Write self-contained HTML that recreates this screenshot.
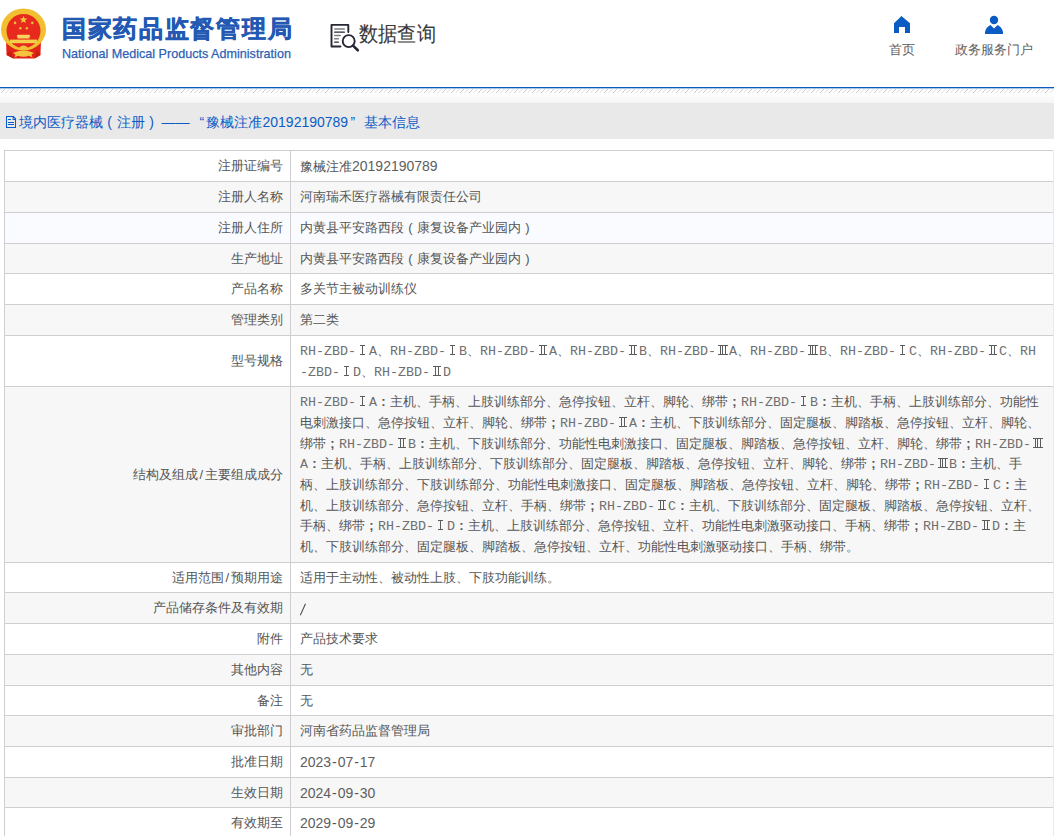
<!DOCTYPE html>
<html><head><meta charset="utf-8">
<style>
html,body{margin:0;padding:0;}
body{width:1054px;height:836px;overflow:hidden;position:relative;background:#fff;font-family:"Liberation Sans",sans-serif;font-size:13px;color:#555;}
.abs{position:absolute;}
.title{position:absolute;left:62px;top:13.5px;font-size:24.2px;font-weight:bold;color:#2459b3;line-height:30px;white-space:nowrap;letter-spacing:1.7px;-webkit-text-stroke:0.5px #2459b3;}
.en{position:absolute;left:62px;top:45.5px;font-size:12.6px;color:#2c5fb5;line-height:16px;white-space:nowrap;-webkit-text-stroke:0.25px #2c5fb5;}
.sq{position:absolute;left:359px;top:19.5px;font-size:21.3px;color:#383838;line-height:28px;white-space:nowrap;transform:scaleX(0.915);transform-origin:0 0;-webkit-text-stroke:0.1px #383838}
.nav{position:absolute;font-size:13px;color:#606060;line-height:16px;white-space:nowrap;}
.blue{position:absolute;left:0;top:87px;width:1054px;height:1px;background:#0a5cc2;}
.blue2{position:absolute;left:0;top:88px;width:1054px;height:1px;background:#a9c5ea;}
.hatch{position:absolute;left:0;top:89px;width:1054px;height:4px;
 background-image:repeating-linear-gradient(135deg, transparent 0px, transparent 2.2px, #c9c9c9 2.2px, #c9c9c9 3.2px, transparent 3.2px, transparent 4.5px);}
.grad{position:absolute;left:0;top:93px;width:1054px;height:10px;background:linear-gradient(#ffffff,#f5f5f5);}
.band{position:absolute;left:0;top:103px;width:1054px;height:36px;background:#e9e9e9;}
.crumb{position:absolute;top:114px;font-size:14px;color:#0b5cc7;line-height:16px;white-space:nowrap;}
.row{position:absolute;left:4px;width:1049px;}
.hl{position:absolute;left:4px;width:1049px;height:1px;background:#d0ced2;}
.vl{position:absolute;top:150px;width:1px;height:690px;background:#d0ced2;}
.lab{position:absolute;right:771px;line-height:20.7px;white-space:nowrap;color:#555;}
.val{position:absolute;left:300px;line-height:20.7px;white-space:nowrap;color:#555;}
.sl{display:inline-block;width:7.5px;text-align:center;}
.c{display:inline-block;width:13px;text-align:center;}
.cb{font-weight:bold;}
.d{font-size:14px;color:#5e5e5e;}
.hy{display:inline-block;width:6.5px;text-align:center;font-size:14px;}
.slv{font-family:"Liberation Sans",sans-serif;font-size:15.5px;color:#666;display:inline-block;transform:scaleX(0.9);}
.m{font-family:"Liberation Mono",monospace;font-size:13.33px;color:#707070;}
.r{display:inline-block;width:13px;height:10px;position:relative;vertical-align:baseline;}
.r::before{content:"";position:absolute;top:0;height:10px;box-sizing:border-box;border-top:1px solid #5c5c5c;border-bottom:1px solid #5c5c5c;}
.r1::before{left:4px;width:5px;background:linear-gradient(#5c5c5c,#5c5c5c) 2px 0/1px 100% no-repeat;}
.r2::before{left:2.5px;width:8px;background:linear-gradient(#5c5c5c,#5c5c5c) 2px 0/1px 100% no-repeat,linear-gradient(#5c5c5c,#5c5c5c) 5px 0/1px 100% no-repeat;}
.r3::before{left:1.5px;width:10px;background:linear-gradient(#5c5c5c,#5c5c5c) 2px 0/1px 100% no-repeat,linear-gradient(#5c5c5c,#5c5c5c) 4.5px 0/1px 100% no-repeat,linear-gradient(#5c5c5c,#5c5c5c) 7px 0/1px 100% no-repeat;}
.crumb.m{color:#0b5cc7;}
</style></head><body>
<svg class="abs" style="left:0;top:0" width="48" height="62" viewBox="0 0 48 62">
  <path d="M6 38 L41 38 L40.5 55 L34.5 58.5 L13 58.5 L6.5 55 Z" fill="#e2231a"/>
  <path d="M10 50 L14 58.5 L6.5 55 Z M37 50 L34.5 58.5 L40.5 55 Z" fill="#c91d14"/>
  <ellipse cx="23.5" cy="29.5" rx="22.5" ry="21" fill="#f1bf30"/>
  <ellipse cx="23.5" cy="31" rx="17" ry="17" fill="#e8291d"/>
  <polygon points="23.5,15.8 24.5,18.6 27.4,18.6 25.1,20.3 26,23.1 23.5,21.4 21,23.1 21.9,20.3 19.6,18.6 22.5,18.6" fill="#f2cc3a"/>
  <circle cx="15.1" cy="22.9" r="1.3" fill="#e6bf38"/>
  <circle cx="32.3" cy="22.9" r="1.3" fill="#e6bf38"/>
  <circle cx="20.4" cy="28.3" r="1.2" fill="#e6bf38"/>
  <circle cx="26.9" cy="28.3" r="1.2" fill="#e6bf38"/>
  <path d="M17.5 34.8 H29.5 L30.5 36.6 H29.5 V38.6 H17.5 V36.6 H16.5 Z" fill="#f6d462"/>
  <rect x="10" y="39.6" width="27" height="3.6" fill="#f5cf4a"/>
  <path d="M19.5 47 Q23.5 44 27.5 47 L26 49 L21 49 Z" fill="#f3c53e"/>
  <path d="M13 53 L17 51.5 Q23.5 49.5 30 51.5 L34 53 L31.5 54.5 L32.5 57.5 L29 55.8 Q23.5 57.5 18 55.8 L14.5 57.5 L15.5 54.5 Z" fill="#f3c53e"/>
</svg>
<div class="title">国家药品监督管理局</div>
<div class="en">National Medical Products Administration</div>
<svg class="abs" style="left:329px;top:22px" width="32" height="32" viewBox="0 0 32 32">
  <path d="M11.5 24.5 H2.5 V2.9 H19.3 V10" fill="none" stroke="#262636" stroke-width="1.9" stroke-linecap="round" stroke-linejoin="round"/>
  <rect x="5" y="6.3" width="11" height="1.5" rx="0.7" fill="#7c7c86"/>
  <rect x="5" y="9.5" width="11" height="1.3" rx="0.6" fill="#262636"/>
  <rect x="5" y="12.8" width="7" height="1.5" rx="0.7" fill="#7c7c86"/>
  <rect x="5" y="16.1" width="5" height="1.5" rx="0.7" fill="#7c7c86"/>
  <rect x="5" y="19.4" width="5" height="1.3" rx="0.6" fill="#262636"/>
  <circle cx="19.7" cy="19.1" r="6" fill="none" stroke="#262636" stroke-width="1.9"/>
  <path d="M24 23.6 L28.8 28.3" stroke="#262636" stroke-width="2.6" stroke-linecap="round"/>
</svg>
<div class="sq">数据查询</div>
<svg class="abs" style="left:893px;top:15px" width="18" height="19" viewBox="0 0 18 19">
  <path d="M1 18 V8.2 L8 1.6 L8.5 0.8 L9 1.6 L17 8.2 V18 H12 V12 H6 V18 Z" fill="#0a5cc4"/>
</svg>
<div class="nav" style="left:889px;top:42px">首页</div>
<svg class="abs" style="left:984px;top:15px" width="20" height="20" viewBox="0 0 20 20">
  <circle cx="10" cy="5" r="4.2" fill="#0a5cc4"/>
  <path d="M1 19 V17 Q2 12 6.5 10 L10 13.5 L13.5 10 Q18 12 19 17 V19 Z" fill="#0a5cc4"/>
</svg>
<div class="nav" style="left:955px;top:42px">政务服务门户</div>
<div class="blue"></div><div class="blue2"></div>
<svg class="abs" style="left:0;top:88px" width="1054" height="6"><defs><pattern id="hp" width="9" height="6" patternUnits="userSpaceOnUse"><path d="M0.5 5.5 L5.5 0.5" stroke="#c2c2c2" stroke-width="0.9"/><path d="M5 5.5 L10 0.5 M-4 5.5 L1 0.5" stroke="#d8d8d8" stroke-width="0.9"/></pattern></defs><rect width="1054" height="6" fill="url(#hp)"/></svg>
<div class="grad"></div>
<div class="band"></div>
<svg class="abs" style="left:5px;top:115px" width="12" height="14" viewBox="0 0 12 14">
  <path d="M1.5 1.5 H8.2 L10.5 3.8 V12.5 H1.5 Z" fill="none" stroke="#0b5cc7" stroke-width="1.05"/>
  <path d="M7.6 1.2 H8.6 L10.8 3.4 V5 H7.6 Z" fill="#0b5cc7"/>
  <circle cx="9" cy="3.5" r="0.55" fill="#fff"/>
  <rect x="3" y="4" width="3" height="1" fill="#0b5cc7"/>
  <rect x="3" y="7" width="6" height="1" fill="#0b5cc7"/>
  <rect x="3" y="9" width="6" height="1" fill="#0b5cc7"/>
</svg>
<div class="crumb" style="left:18.5px">境内医疗器械<span class="c" style="width:14px">(</span>注册<span class="c" style="width:14px">)</span></div>
<div class="crumb" style="left:161.5px">——</div>
<div class="crumb" style="left:199.5px">“</div>
<div class="crumb" style="left:205.5px">豫械注准</div>
<div class="crumb" style="left:262.5px">20192190789</div>
<div class="crumb" style="left:350.5px">”</div>
<div class="crumb" style="left:364px">基本信息</div>
<div class="row" style="top:150px;height:31px;background:#ffffff"></div>
<div class="lab" style="top:156.15px">注册证编号</div>
<div class="val" style="top:156.15px">豫械注准<span class="d">20192190789</span></div>
<div class="row" style="top:181px;height:31px;background:#f7f7f7"></div>
<div class="lab" style="top:187.15px">注册人名称</div>
<div class="val" style="top:187.15px">河南瑞禾医疗器械有限责任公司</div>
<div class="row" style="top:212px;height:31px;background:#fafbfe"></div>
<div class="lab" style="top:218.15px">注册人住所</div>
<div class="val" style="top:218.15px">内黄县平安路西段<span class="c">(</span>康复设备产业园内<span class="c">)</span></div>
<div class="row" style="top:243px;height:30px;background:#f7f7f7"></div>
<div class="lab" style="top:248.65px">生产地址</div>
<div class="val" style="top:248.65px">内黄县平安路西段<span class="c">(</span>康复设备产业园内<span class="c">)</span></div>
<div class="row" style="top:273px;height:31px;background:#ffffff"></div>
<div class="lab" style="top:279.15px">产品名称</div>
<div class="val" style="top:279.15px">多关节主被动训练仪</div>
<div class="row" style="top:304px;height:31px;background:#f7f7f7"></div>
<div class="lab" style="top:310.15px">管理类别</div>
<div class="val" style="top:310.15px">第二类</div>
<div class="row" style="top:335px;height:51px;background:#ffffff"></div>
<div class="lab" style="top:351.15px">型号规格</div>
<div class="val" style="top:340.80px"><span class="m">RH</span><span class="m">-</span><span class="m">ZBD</span><span class="m">-</span><span class="r r1"></span><span class="m">A</span>、<span class="m">RH</span><span class="m">-</span><span class="m">ZBD</span><span class="m">-</span><span class="r r1"></span><span class="m">B</span>、<span class="m">RH</span><span class="m">-</span><span class="m">ZBD</span><span class="m">-</span><span class="r r2"></span><span class="m">A</span>、<span class="m">RH</span><span class="m">-</span><span class="m">ZBD</span><span class="m">-</span><span class="r r2"></span><span class="m">B</span>、<span class="m">RH</span><span class="m">-</span><span class="m">ZBD</span><span class="m">-</span><span class="r r3"></span><span class="m">A</span>、<span class="m">RH</span><span class="m">-</span><span class="m">ZBD</span><span class="m">-</span><span class="r r3"></span><span class="m">B</span>、<span class="m">RH</span><span class="m">-</span><span class="m">ZBD</span><span class="m">-</span><span class="r r1"></span><span class="m">C</span>、<span class="m">RH</span><span class="m">-</span><span class="m">ZBD</span><span class="m">-</span><span class="r r2"></span><span class="m">C</span>、<span class="m">RH</span></div>
<div class="val" style="top:361.50px"><span class="m">-</span><span class="m">ZBD</span><span class="m">-</span><span class="r r1"></span><span class="m">D</span>、<span class="m">RH</span><span class="m">-</span><span class="m">ZBD</span><span class="m">-</span><span class="r r2"></span><span class="m">D</span></div>
<div class="row" style="top:386px;height:176px;background:#f7f7f7"></div>
<div class="lab" style="top:464.65px">结构及组成<span class="sl">/</span>主要组成成分</div>
<div class="val" style="top:392.20px"><span class="m">RH</span><span class="m">-</span><span class="m">ZBD</span><span class="m">-</span><span class="r r1"></span><span class="m">A</span><span class="c cb">:</span>主机、手柄、上肢训练部分、急停按钮、立杆、脚轮、绑带<span class="c cb">;</span><span class="m">RH</span><span class="m">-</span><span class="m">ZBD</span><span class="m">-</span><span class="r r1"></span><span class="m">B</span><span class="c cb">:</span>主机、手柄、上肢训练部分、功能性</div>
<div class="val" style="top:412.90px">电刺激接口、急停按钮、立杆、脚轮、绑带<span class="c cb">;</span><span class="m">RH</span><span class="m">-</span><span class="m">ZBD</span><span class="m">-</span><span class="r r2"></span><span class="m">A</span><span class="c cb">:</span>主机、下肢训练部分、固定腿板、脚踏板、急停按钮、立杆、脚轮、</div>
<div class="val" style="top:433.60px">绑带<span class="c cb">;</span><span class="m">RH</span><span class="m">-</span><span class="m">ZBD</span><span class="m">-</span><span class="r r2"></span><span class="m">B</span><span class="c cb">:</span>主机、下肢训练部分、功能性电刺激接口、固定腿板、脚踏板、急停按钮、立杆、脚轮、绑带<span class="c cb">;</span><span class="m">RH</span><span class="m">-</span><span class="m">ZBD</span><span class="m">-</span><span class="r r3"></span></div>
<div class="val" style="top:454.30px"><span class="m">A</span><span class="c cb">:</span>主机、手柄、上肢训练部分、下肢训练部分、固定腿板、脚踏板、急停按钮、立杆、脚轮、绑带<span class="c cb">;</span><span class="m">RH</span><span class="m">-</span><span class="m">ZBD</span><span class="m">-</span><span class="r r3"></span><span class="m">B</span><span class="c cb">:</span>主机、手</div>
<div class="val" style="top:475.00px">柄、上肢训练部分、下肢训练部分、功能性电刺激接口、固定腿板、脚踏板、急停按钮、立杆、脚轮、绑带<span class="c cb">;</span><span class="m">RH</span><span class="m">-</span><span class="m">ZBD</span><span class="m">-</span><span class="r r1"></span><span class="m">C</span><span class="c cb">:</span>主</div>
<div class="val" style="top:495.70px">机、上肢训练部分、急停按钮、立杆、手柄、绑带<span class="c cb">;</span><span class="m">RH</span><span class="m">-</span><span class="m">ZBD</span><span class="m">-</span><span class="r r2"></span><span class="m">C</span><span class="c cb">:</span>主机、下肢训练部分、固定腿板、脚踏板、急停按钮、立杆、</div>
<div class="val" style="top:516.40px">手柄、绑带<span class="c cb">;</span><span class="m">RH</span><span class="m">-</span><span class="m">ZBD</span><span class="m">-</span><span class="r r1"></span><span class="m">D</span><span class="c cb">:</span>主机、上肢训练部分、急停按钮、立杆、功能性电刺激驱动接口、手柄、绑带<span class="c cb">;</span><span class="m">RH</span><span class="m">-</span><span class="m">ZBD</span><span class="m">-</span><span class="r r2"></span><span class="m">D</span><span class="c cb">:</span>主</div>
<div class="val" style="top:537.10px">机、下肢训练部分、固定腿板、脚踏板、急停按钮、立杆、功能性电刺激驱动接口、手柄、绑带。</div>
<div class="row" style="top:562px;height:30px;background:#ffffff"></div>
<div class="lab" style="top:567.65px">适用范围<span class="sl">/</span>预期用途</div>
<div class="val" style="top:567.65px">适用于主动性、被动性上肢、下肢功能训练。</div>
<div class="row" style="top:592px;height:31px;background:#f7f7f7"></div>
<div class="lab" style="top:598.15px">产品储存条件及有效期</div>
<svg class="abs" style="left:299px;top:600.7px" width="9" height="15" viewBox="0 0 9 15"><path d="M1.3 14.2 L6.5 2.8" stroke="#4a4a4a" stroke-width="1.05"/></svg>
<div class="row" style="top:623px;height:31px;background:#ffffff"></div>
<div class="lab" style="top:629.15px">附件</div>
<div class="val" style="top:629.15px">产品技术要求</div>
<div class="row" style="top:654px;height:31px;background:#f7f7f7"></div>
<div class="lab" style="top:660.15px">其他内容</div>
<div class="val" style="top:660.15px">无</div>
<div class="row" style="top:685px;height:30px;background:#ffffff"></div>
<div class="lab" style="top:690.65px">备注</div>
<div class="val" style="top:690.65px">无</div>
<div class="row" style="top:715px;height:31px;background:#f7f7f7"></div>
<div class="lab" style="top:721.15px">审批部门</div>
<div class="val" style="top:721.15px">河南省药品监督管理局</div>
<div class="row" style="top:746px;height:31px;background:#ffffff"></div>
<div class="lab" style="top:752.15px">批准日期</div>
<div class="val dt" style="top:752.15px"><span class="d">2023</span><span class="hy">-</span><span class="d">07</span><span class="hy">-</span><span class="d">17</span></div>
<div class="row" style="top:777px;height:30px;background:#f7f7f7"></div>
<div class="lab" style="top:782.65px">生效日期</div>
<div class="val dt" style="top:782.65px"><span class="d">2024</span><span class="hy">-</span><span class="d">09</span><span class="hy">-</span><span class="d">30</span></div>
<div class="row" style="top:807px;height:31px;background:#ffffff"></div>
<div class="lab" style="top:813.15px">有效期至</div>
<div class="val dt" style="top:813.15px"><span class="d">2029</span><span class="hy">-</span><span class="d">09</span><span class="hy">-</span><span class="d">29</span></div>
<div class="hl" style="top:150px"></div>
<div class="hl" style="top:181px"></div>
<div class="hl" style="top:212px"></div>
<div class="hl" style="top:243px"></div>
<div class="hl" style="top:273px"></div>
<div class="hl" style="top:304px"></div>
<div class="hl" style="top:335px"></div>
<div class="hl" style="top:386px"></div>
<div class="hl" style="top:562px"></div>
<div class="hl" style="top:592px"></div>
<div class="hl" style="top:623px"></div>
<div class="hl" style="top:654px"></div>
<div class="hl" style="top:685px"></div>
<div class="hl" style="top:715px"></div>
<div class="hl" style="top:746px"></div>
<div class="hl" style="top:777px"></div>
<div class="hl" style="top:807px"></div>
<div class="hl" style="top:838px"></div>
<div class="vl" style="left:4px"></div>
<div class="vl" style="left:290px"></div>
<div class="abs" style="left:1053px;top:151px;width:1px;height:690px;background:#e6e9f4"></div>
</body></html>
